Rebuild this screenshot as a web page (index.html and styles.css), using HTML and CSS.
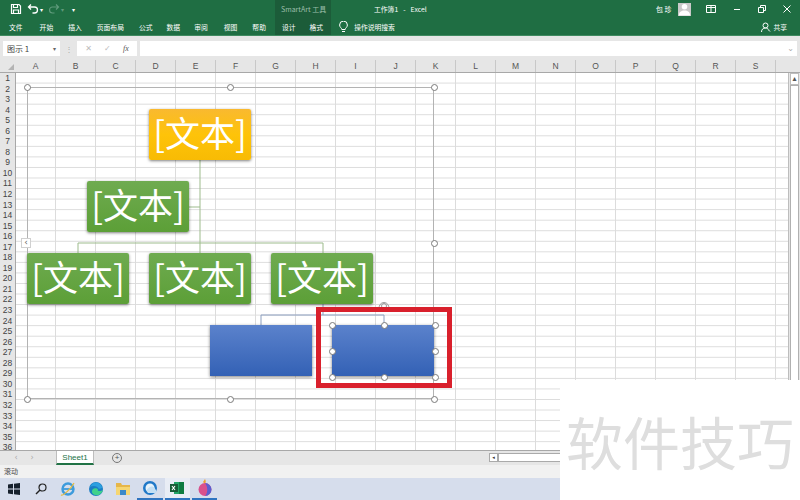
FILE: index.html
```html
<!DOCTYPE html>
<html lang="zh-CN">
<head>
    <meta charset="UTF-8">
    <title>工作簿1 - Excel</title>
    <link rel="stylesheet" href="styles.css">
</head>
<body>
    <div class="app">
        <!-- title bar + ribbon tabs -->
        <div class="ribbon">
            <div class="context-tab"></div>
            <div class="title-row">
                <div class="quick">
                    <svg width="12" height="12" viewBox="0 0 12 12"><path d="M1.500 1.500h7.500l1.500 1.500v7.500h-9z M3.500 1.500v3h4v-3 M3.500 10.500v-3.500h5v3.500" fill="none" stroke="#fff" stroke-width="1.200"/></svg>
                    <svg class="undo" width="12" height="12" viewBox="0 0 12 12"><path d="M4 1.500l-2.500 2.500 2.500 2.500 M1.500 4h6a2.800 2.800 0 0 1 0 6h-2" fill="none" stroke="#fff" stroke-width="1.300"/></svg>
                    <span class="caret">▾</span>
                    <svg class="redo" width="12" height="12" viewBox="0 0 12 12"><path d="M8 1.500l2.500 2.500-2.500 2.500 M10.500 4h-6a2.800 2.800 0 0 0 0 6h2" fill="none" stroke="#5f9a7b" stroke-width="1.200"/></svg>
                    <span class="caret dim">▾</span>
                    <span class="caret more">▾</span>
                </div>
                <div class="smartart-label">SmartArt 工具</div>
                <div class="doc-title">工作簿1 &nbsp;-&nbsp; Excel</div>
                <div class="account">
                    <span class="user-name">包 珍</span>
                    <span class="avatar">
                        <svg width="14" height="14" viewBox="0 0 14 14"><circle cx="7" cy="4.500" r="3" fill="#fff"/><path d="M1 14c0-4 2.500-5.500 6-5.500s6 1.500 6 5.500z" fill="#fff"/></svg>
                    </span>
                    <svg class="win-btn" width="10" height="8" viewBox="0 0 10 8"><path d="M.5.500h9v7h-9z M5 .500v7 M.5 2.500h4.500 M5 2.500h4.500" fill="none" stroke="#fff"/></svg>
                    <svg class="win-btn" width="8" height="8" viewBox="0 0 8 8"><path d="M1 4.500h6" stroke="#fff" fill="none"/></svg>
                    <svg class="win-btn" width="8" height="8" viewBox="0 0 8 8"><path d="M.5 2.500h5v5h-5z M2.500 2.500v-2h5v5h-2" stroke="#fff" fill="none"/></svg>
                    <svg class="win-btn" width="8" height="8" viewBox="0 0 8 8"><path d="M.5.500l7 7 M7.500.500l-7 7" stroke="#fff" fill="none"/></svg>
                </div>
            </div>
            <div class="tab-row">
                <span class="tab t-file">文件</span>
                <span class="tab t-home">开始</span>
                <span class="tab t-insert">插入</span>
                <span class="tab t-layout">页面布局</span>
                <span class="tab t-formula">公式</span>
                <span class="tab t-data">数据</span>
                <span class="tab t-review">审阅</span>
                <span class="tab t-view">视图</span>
                <span class="tab t-help">帮助</span>
                <span class="tab t-design">设计</span>
                <span class="tab t-format">格式</span>
                <svg class="bulb" width="9" height="12" viewBox="0 0 9 12"><path d="M2.800 8.500c0-1.500-2.200-2.200-2.200-4.500a3.900 3.900 0 0 1 7.800 0c0 2.300-2.200 3-2.200 4.500z M3 10.500h3" fill="none" stroke="#fff"/></svg>
                <span class="tab t-search">操作说明搜索</span>
                <span class="share">
                    <svg width="10" height="10" viewBox="0 0 10 10"><circle cx="4.500" cy="3.500" r="2.500" fill="none" stroke="#fff"/><path d="M.5 10c0-2.500 1.500-4 4-4 1.500 0 2.500.5 3.200 1.500 M7 7.500l2 2" fill="none" stroke="#fff"/></svg>
                    共享
                </span>
            </div>
        </div>

        <!-- name box and formula bar -->
        <div class="formula-bar">
            <div class="name-box"><span>图示 1</span><span class="name-caret">▾</span></div>
            <span class="grip">⋮</span>
            <div class="fx-box">
                <span class="fx-btn">✕</span>
                <span class="fx-btn">✓</span>
                <span class="fx-btn fx">fx</span>
            </div>
            <div class="formula-input"><span class="input-caret">⌄</span></div>
        </div>

        <!-- sheet -->
        <div class="sheet">
            <div class="col-head">
                <div class="corner"></div>
                <span>A</span><span>B</span><span>C</span><span>D</span><span>E</span><span>F</span><span>G</span><span>H</span><span>I</span><span>J</span><span>K</span><span>L</span><span>M</span><span>N</span><span>O</span><span>P</span><span>Q</span><span>R</span><span>S</span>
                <div class="col-rest"></div>
            </div>
            <div class="sheet-body">
                <div class="row-head">
                    <span>1</span><span>2</span><span>3</span><span>4</span><span>5</span><span>6</span><span>7</span><span>8</span><span>9</span><span>10</span><span>11</span><span>12</span><span>13</span><span>14</span><span>15</span><span>16</span><span>17</span><span>18</span><span>19</span><span>20</span><span>21</span><span>22</span><span>23</span><span>24</span><span>25</span><span>26</span><span>27</span><span>28</span><span>29</span><span>30</span><span>31</span><span>32</span><span>33</span><span>34</span><span>35</span><span>36</span>
                </div>
                <div class="cells">
                    <!-- SmartArt canvas, coordinates relative to cells (page x-16, y-73) -->
                    <div class="frame"></div>
                    <svg class="links" width="772" height="378" viewBox="0 0 772 378">
                        <path d="M184 87V180 M173 134H184 M62 180V170H307V180" fill="none" stroke="#9dbb8c" stroke-width="1"/>
                        <path d="M307 231V242 M245 252V242H368V252" fill="none" stroke="#8c9fc0" stroke-width="1"/>
                    </svg>
                    <div class="node yellow n1">[文本]</div>
                    <div class="node green n2">[文本]</div>
                    <div class="node green n3">[文本]</div>
                    <div class="node green n4">[文本]</div>
                    <div class="node green n5">[文本]</div>
                    <div class="node blue n6"></div>
                    <div class="node blue n7"></div>

                    <i class="handle f-left f-top"></i>
                    <i class="handle f-mid f-top"></i>
                    <i class="handle f-right f-top"></i>
                    <i class="handle f-right f-center"></i>
                    <i class="handle f-left f-bottom"></i>
                    <i class="handle f-mid f-bottom"></i>
                    <i class="handle f-right f-bottom"></i>

                    <i class="handle s-left s-top"></i>
                    <i class="handle s-mid s-top"></i>
                    <i class="handle s-right s-top"></i>
                    <i class="handle s-left s-center"></i>
                    <i class="handle s-right s-center"></i>
                    <i class="handle s-left s-bottom"></i>
                    <i class="handle s-mid s-bottom"></i>
                    <i class="handle s-right s-bottom"></i>

                    <svg class="rotate" width="14" height="10" viewBox="0 0 14 10"><path d="M2.500 9a4.800 4.800 0 1 1 9 0" fill="none" stroke="#999" stroke-width="1"/><circle cx="7" cy="6" r="2.500" fill="none" stroke="#999"/></svg>
                    <div class="pane-toggle">‹</div>
                    <div class="red-box"></div>
                </div>
                <div class="vscroll">
                    <span class="scroll-up">▴</span>
                    <div class="scroll-track"></div>
                </div>
            </div>
        </div>

        <!-- sheet tabs -->
        <div class="tabs-bar">
            <span class="nav">‹</span>
            <span class="nav">›</span>
            <span class="sheet-tab">Sheet1</span>
            <span class="add-sheet">+</span>
            <div class="hscroll"><span class="hscroll-btn">◂</span><div class="hscroll-track"></div></div>
        </div>

        <div class="status">滚动</div>

        <!-- windows taskbar -->
        <div class="taskbar">
            <span class="task"><svg width="12" height="12" viewBox="0 0 12 12"><path d="M0 1.500l5-.7v4.700H0z M6 .7l6-.7v5.500H6z M0 6.500h5v4.700l-5-.7z M6 6.500h6V12l-6-.7z" fill="#16202c"/></svg></span>
            <span class="task"><svg width="12" height="12" viewBox="0 0 12 12"><circle cx="7.500" cy="4.500" r="3.500" fill="none" stroke="#222" stroke-width="1.200"/><path d="M5 7L1 11" stroke="#222" stroke-width="1.500"/></svg></span>
            <span class="task"><svg width="16" height="16" viewBox="0 0 16 16"><circle cx="8" cy="8" r="5.500" fill="none" stroke="#3d9bdc" stroke-width="2.400"/><path d="M3 8h10" stroke="#3d9bdc" stroke-width="1.800"/><path d="M1 14C3 15 11 8 14 2" fill="none" stroke="#e5b93c" stroke-width="1.200"/></svg></span>
            <span class="task"><svg width="16" height="16" viewBox="0 0 16 16"><circle cx="8" cy="8" r="7" fill="#1b7dc4"/><path d="M15 9c-1 4-5 6-8 5-3-1-4-4-2-6 1-1 4-1.500 5 .5-1 1.500 2 2.500 5 .5z" fill="#3fd18b"/><path d="M2 6c1-3 4-5 7-4.500 3 .5 5 3 5 5 0 1-2 1.500-3.500 1C10 5 5 4 2 6z" fill="#2b9fe0"/></svg></span>
            <span class="task"><svg width="16" height="14" viewBox="0 0 16 14"><path d="M1 1h5l1 2h8v3H1z" fill="#e6b64a"/><path d="M1 5h14v8H1z" fill="#f6d672"/><path d="M5 8h6v5H5z" fill="#3a89c9"/></svg></span>
            <span class="task running"><svg width="16" height="16" viewBox="0 0 16 16"><circle cx="8" cy="8" r="7" fill="#1f78c8"/><circle cx="8" cy="8" r="4.500" fill="#e8f3fb"/><path d="M6 13a3 3 0 0 1 .5-5 4 4 0 0 1 7 1.500 2 2 0 0 1 0 3.500z" fill="#c4dff3"/></svg></span>
            <span class="task running active"><svg width="16" height="14" viewBox="0 0 16 14"><path d="M5 1h10v12H5z" fill="#21a366"/><path d="M10 1h5v12h-5z" fill="#107c41"/><path d="M1 3h8v8H1z" fill="#185c37"/><path d="M3 5l3 4 M6 5L3 9" stroke="#fff" stroke-width="1.100"/></svg></span>
            <span class="task running"><svg width="14" height="18" viewBox="0 0 14 18"><path d="M7 0c1 2 1 3 0 5L5 3z" fill="#f0a030"/><circle cx="7" cy="10.500" r="6.500" fill="#d9508c"/><path d="M7 4a6.500 6.500 0 0 1 0 13c3-3 3-9 0-13z" fill="#5a5fd0"/></svg></span>
        </div>
    </div>

    <!-- watermark patch -->
    <div class="watermark">软件技巧</div>
</body>
</html>
```

FILE: styles.css
```css
* {
    box-sizing: border-box;
}

body {
    margin: 0;
    width: 800px;
    height: 500px;
    overflow: hidden;
    position: relative;
    font-family: "Noto Sans CJK SC", "Liberation Sans", sans-serif;
    background: #fff;
}

.app {
    width: 800px;
    height: 500px;
    display: flex;
    flex-direction: column;
}

/* Ribbon */
.ribbon {
    height: 36px;
    flex: none;
    background: #1f6e43;
    border-bottom: 1px solid #3f8a60;
    color: #fff;
    position: relative;
}

.context-tab {
    position: absolute;
    left: 275px;
    top: 0;
    width: 56px;
    height: 35px;
    background: #1c5c39;
}

.title-row {
    height: 18px;
    display: flex;
    align-items: center;
    position: relative;
}

.quick {
    width: 281px;
    padding-left: 10px;
    display: flex;
    align-items: center;
}

.quick .undo {
    margin-left: 5px;
}

.quick .redo {
    margin-left: 5px;
}

.caret {
    font-size: 6px;
    margin-left: 1px;
    font-family: "DejaVu Sans", sans-serif;
}

.caret.dim {
    color: #5f9a7b;
}

.caret.more {
    margin-left: 8px;
}

.smartart-label {
    width: 93px;
    font-size: 7px;
    color: #9dbfab;
}

.doc-title {
    width: 200px;
    font-size: 6.800px;
    word-spacing: 1px;
}

.account {
    flex: 1;
    display: flex;
    align-items: center;
    padding-left: 82px;
}

.user-name {
    font-size: 7px;
    width: 22px;
}

.avatar {
    width: 13px;
    height: 13px;
    background: #c9c9c9;
    display: flex;
    align-items: flex-end;
    justify-content: center;
    overflow: hidden;
    margin-right: 15px;
}

.win-btn {
    margin-right: 17px;
}

.win-btn:last-child {
    margin-right: 0;
}

.tab-row {
    height: 17px;
    position: relative;
    display: flex;
    align-items: center;
    font-size: 6.800px;
}

.tab {
    color: #fff;
    flex: none;
}

.t-file { margin-left: 9px; }
.t-home { margin-left: 17px; }
.t-insert { margin-left: 15px; }
.t-layout { margin-left: 15px; }
.t-formula { margin-left: 15px; }
.t-data { margin-left: 14px; }
.t-review { margin-left: 14px; }
.t-view { margin-left: 16px; }
.t-help { margin-left: 15px; }
.t-design { margin-left: 16px; }
.t-format { margin-left: 14px; }

.bulb {
    margin-left: 16px;
    flex: none;
}

.t-search {
    margin-left: 6px;
}

.share {
    margin-left: auto;
    margin-right: 13px;
    display: flex;
    align-items: center;
    gap: 2px;
}

/* Formula bar */
.formula-bar {
    height: 24px;
    flex: none;
    background: #e6e6e6;
    display: flex;
    align-items: center;
    padding: 0 3px;
}

.name-box {
    width: 57px;
    height: 15px;
    background: #fff;
    display: flex;
    align-items: center;
    justify-content: space-between;
    padding: 0 4px;
    font-size: 8px;
    color: #444;
}

.name-caret {
    font-size: 6px;
    font-family: "DejaVu Sans", sans-serif;
    color: #666;
}

.grip {
    width: 17px;
    text-align: center;
    font-size: 8px;
    color: #aaa;
}

.fx-box {
    width: 60px;
    height: 15px;
    background: #fff;
    display: flex;
    align-items: center;
    justify-content: space-around;
    padding: 0 2px;
}

.fx-btn {
    font-size: 8px;
    color: #bbb;
    font-family: "DejaVu Sans", sans-serif;
}

.fx-btn.fx {
    color: #555;
    font-family: "Liberation Serif", serif;
    font-style: italic;
}

.formula-input {
    flex: 1;
    margin-left: 3px;
    height: 15px;
    background: #fff;
    position: relative;
    display: flex;
    justify-content: flex-end;
    align-items: center;
    padding-right: 3px;
}

.input-caret {
    font-size: 8px;
    color: #aaa;
    font-family: "DejaVu Sans", sans-serif;
}

/* Sheet */
.sheet {
    flex: 1;
    min-height: 0;
    display: flex;
    flex-direction: column;
    overflow: hidden;
    background: #fff;
}

.col-head {
    height: 13px;
    flex: none;
    display: flex;
    background: #e6e6e6;
    border-bottom: 1px solid #a8a8a8;
}

.corner {
    width: 16px;
    flex: none;
    position: relative;
}

.corner::after {
    content: "";
    position: absolute;
    right: 2px;
    bottom: 2px;
    border-style: solid;
    border-width: 0 0 6px 6px;
    border-color: transparent transparent #b4b4b4 transparent;
}

.col-head span {
    width: 40px;
    flex: none;
    text-align: center;
    font-size: 8.500px;
    line-height: 12px;
    color: #555;
    border-right: 1px solid #c8c8c8;
    font-family: "Liberation Sans", sans-serif;
}

.col-rest {
    flex: 1;
}

.sheet-body {
    flex: 1;
    min-height: 0;
    display: flex;
}

.row-head {
    width: 16px;
    flex: none;
    background: #e6e6e6;
    border-right: 1px solid #a8a8a8;
}

.row-head span {
    display: block;
    height: 10.550px;
    line-height: 10.550px;
    text-align: center;
    font-size: 8.500px;
    color: #444;
    font-family: "Liberation Sans", sans-serif;
}

.cells {
    flex: 1;
    position: relative;
    background-color: #fff;
    background-image:
        linear-gradient(to right, transparent 39px, #dcdcdc 39px),
        linear-gradient(to bottom, transparent 9.550px, #dcdcdc 9.550px);
    background-size: 40px 100%, 100% 10.550px;
}

.frame {
    position: absolute;
    left: 11px;
    top: 14px;
    width: 407px;
    height: 312px;
    border: 1px solid #b3b3b3;
}

.links {
    position: absolute;
    left: 0;
    top: 0;
}

.node {
    position: absolute;
    width: 102px;
    height: 51px;
    color: #fff;
    font-size: 35px;
    line-height: 46px;
    text-align: center;
    border-radius: 2px;
    box-shadow: 0 1px 3px rgba(0, 0, 0, 0.5);
    white-space: nowrap;
}

.yellow { background: linear-gradient(#f9b930, #fec309 50%, #f8bb04); }
.green { background: linear-gradient(#6fab50, #5c9f37); }
.blue { background: linear-gradient(#5b82cc, #3361b5); border-radius: 0; }

.n1 { left: 133px; top: 36px; }
.n2 { left: 71px; top: 108px; }
.n3 { left: 11px; top: 180px; }
.n4 { left: 133px; top: 180px; }
.n5 { left: 255px; top: 180px; }
.n6 { left: 194px; top: 252px; }
.n7 { left: 316px; top: 252px; }

.handle {
    position: absolute;
    width: 7px;
    height: 7px;
    margin: -3px 0 0 -3px;
    background: #fff;
    border: 1px solid #7a7a7a;
    border-radius: 50%;
}

/* diagram frame handles */
.f-left { left: 11px; }
.f-mid { left: 214px; }
.f-right { left: 418px; }
.f-top { top: 14px; }
.f-center { top: 170px; }
.f-bottom { top: 326px; }

/* selected shape handles */
.s-left { left: 316px; }
.s-mid { left: 368px; }
.s-right { left: 419px; }
.s-top { top: 252px; }
.s-center { top: 278px; }
.s-bottom { top: 304px; }

.rotate {
    position: absolute;
    left: 361px;
    top: 227px;
}

.pane-toggle {
    position: absolute;
    left: 5px;
    top: 165px;
    width: 10px;
    height: 10px;
    background: #fff;
    border: 1px solid #d0d0d0;
    font-size: 9px;
    line-height: 7px;
    text-align: center;
    color: #666;
    font-family: "DejaVu Sans", sans-serif;
}

.red-box {
    position: absolute;
    left: 300px;
    top: 234px;
    width: 136px;
    height: 81px;
    border: 5px solid #d9202c;
}

.vscroll {
    width: 12px;
    flex: none;
    background: #e6e6e6;
    border-left: 1px solid #bdbdbd;
    display: flex;
    flex-direction: column;
    padding: 0 1px;
}

.scroll-up {
    height: 12px;
    font-size: 8px;
    line-height: 10px;
    text-align: center;
    color: #555;
    background: #fff;
    border: 1px solid #bdbdbd;
    font-family: "DejaVu Sans", sans-serif;
}

.scroll-track {
    flex: 1;
    background: #fff;
    border: 1px solid #b0b0b0;
}

/* Sheet tabs */
.tabs-bar {
    height: 15px;
    flex: none;
    background: #e6e6e6;
    border-top: 1px solid #a8a8a8;
    display: flex;
    align-items: flex-start;
    font-size: 8px;
    color: #aaa;
}

.nav {
    width: 16px;
    text-align: center;
    line-height: 14px;
    margin-left: 0;
    font-family: "DejaVu Sans", sans-serif;
}

.nav:first-child {
    margin-left: 8px;
}

.sheet-tab {
    margin-left: 16px;
    width: 38px;
    height: 14px;
    background: #fff;
    color: #217346;
    text-align: center;
    line-height: 13px;
    border: 1px solid #bdbdbd;
    border-top: 0;
    border-bottom: 2px solid #217346;
    font-family: "Liberation Sans", sans-serif;
}

.add-sheet {
    margin-left: 18px;
    margin-top: 2px;
    width: 10px;
    height: 10px;
    border: 1px solid #777;
    border-radius: 50%;
    color: #555;
    text-align: center;
    line-height: 8px;
    font-family: "Liberation Sans", sans-serif;
}

.hscroll {
    margin-left: 367px;
    margin-top: 2px;
    flex: 1;
    height: 9px;
    display: flex;
}

.hscroll-btn {
    width: 9px;
    height: 9px;
    background: #fff;
    border: 1px solid #aaa;
    font-size: 5px;
    line-height: 7px;
    text-align: center;
    color: #333;
    font-family: "DejaVu Sans", sans-serif;
}

.hscroll-track {
    flex: 1;
    background: #fff;
    border: 1px solid #aaa;
}

.status {
    height: 13px;
    flex: none;
    background: #f1f1f1;
    font-size: 7px;
    line-height: 13px;
    padding-left: 4px;
    color: #444;
}

/* Taskbar */
.taskbar {
    height: 22px;
    flex: none;
    background: #d6ddec;
    display: flex;
}

.task {
    width: 27.300px;
    height: 22px;
    display: flex;
    align-items: center;
    justify-content: center;
}

.task.running {
    border-bottom: 2px solid #2f74c0;
    margin: 0 1px;
    width: 25.300px;
}

.task.active {
    background: #e9edf5;
}

/* Watermark */
.watermark {
    position: absolute;
    left: 560px;
    top: 380px;
    width: 240px;
    height: 120px;
    background: #fff;
    color: #dedede;
    font-size: 57px;
    line-height: 120px;
    text-align: center;
    white-space: nowrap;
}
```
